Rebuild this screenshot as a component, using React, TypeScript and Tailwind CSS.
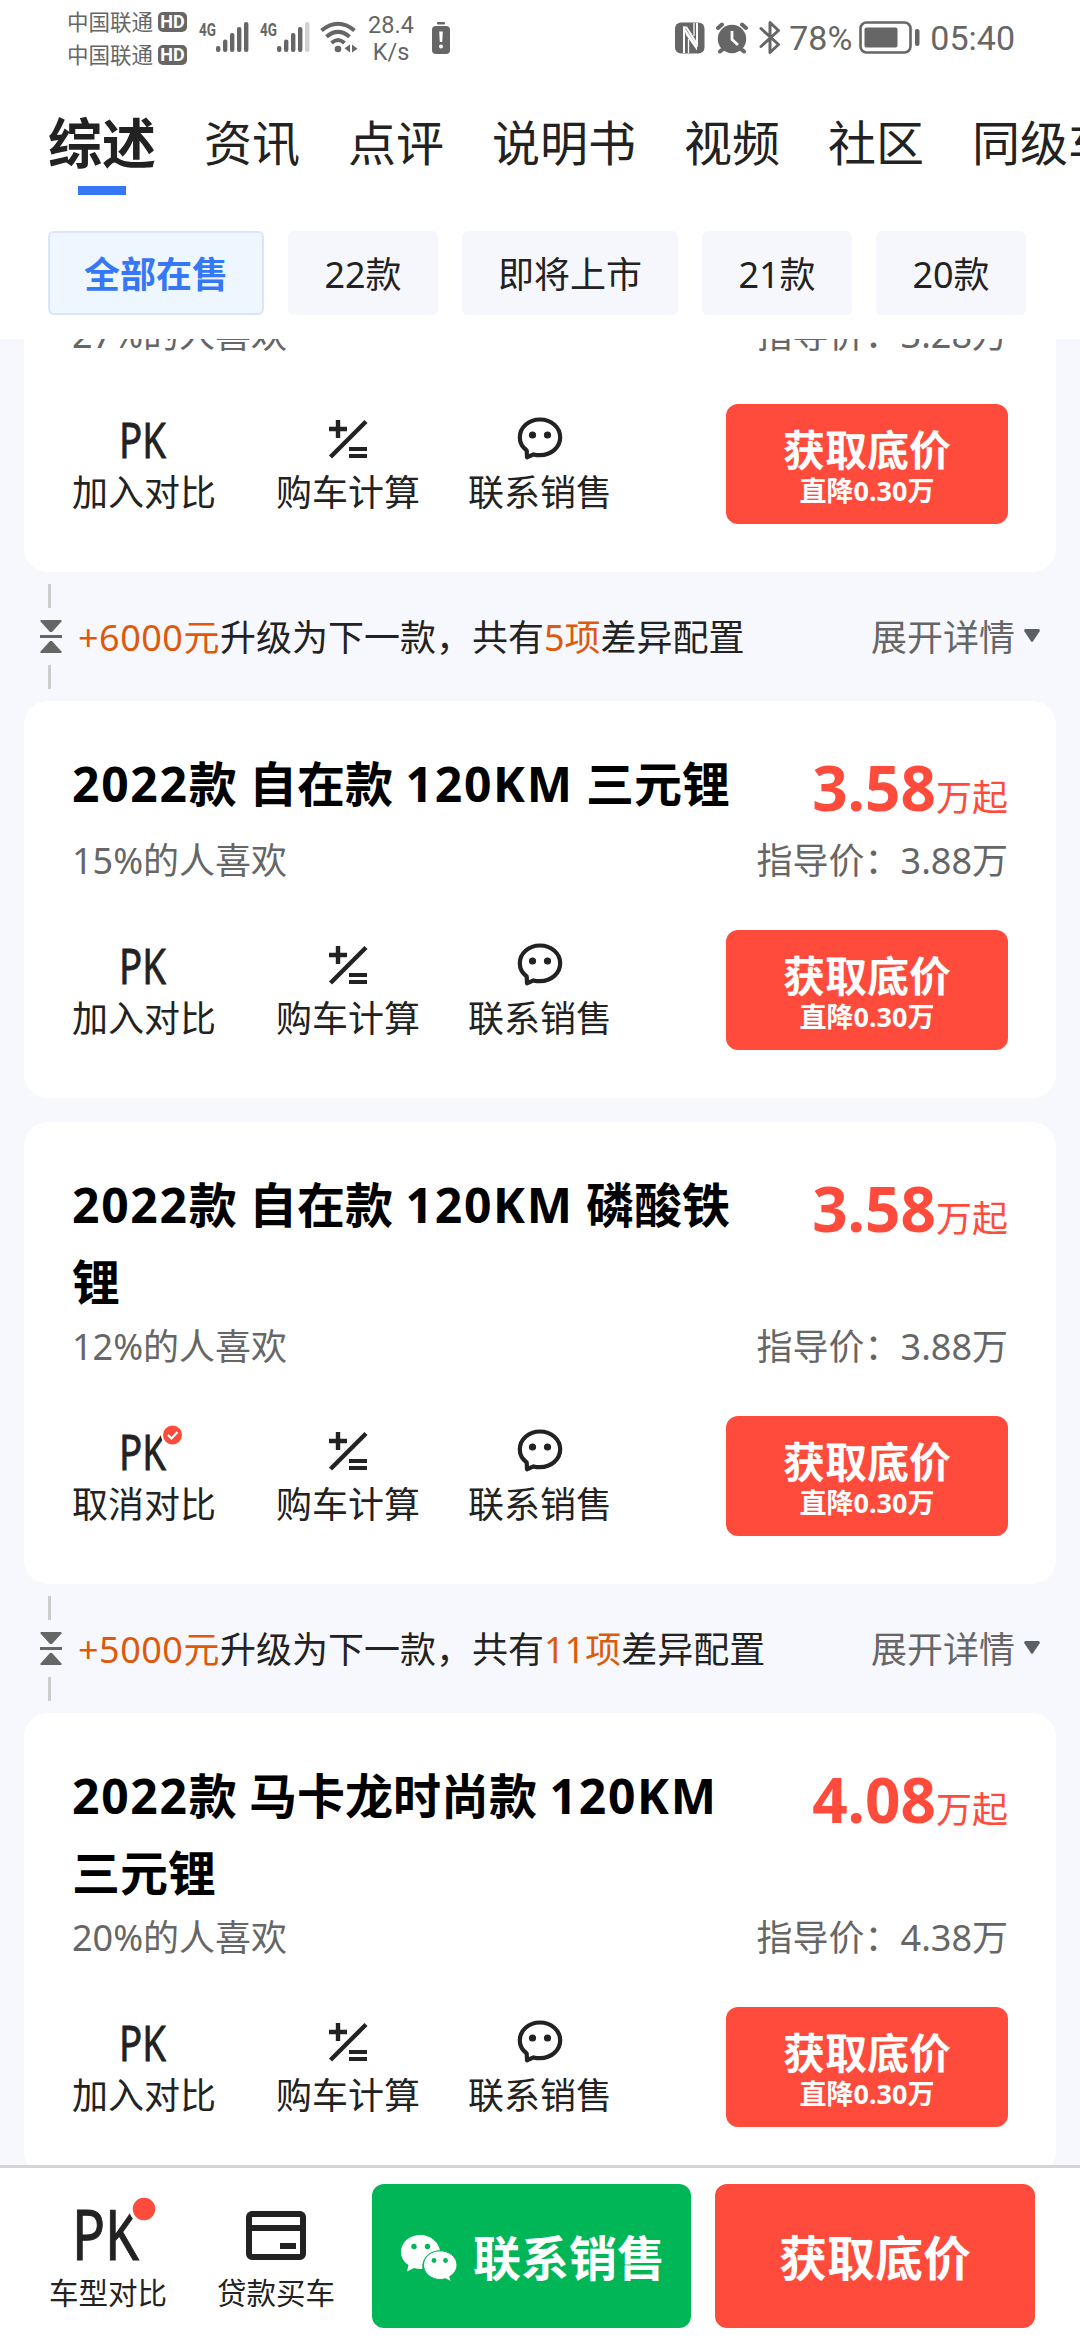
import React from 'react';

interface Car {
  title: string;
  likes: string;
  price: string;
  guide: string;
  compared?: boolean;
}

const tabs = ['资讯', '点评', '说明书', '视频', '社区', '同级车'];

const filters = [
  { label: '全部在售', wide: true, active: true },
  { label: '22款' },
  { label: '即将上市', wide: true },
  { label: '21款' },
  { label: '20款' },
];

const cars: Car[] = [
  { title: '2022款 轻松款 120KM', likes: '27%', price: '2.98', guide: '3.28万' },
  { title: '2022款 自在款 120KM 三元锂', likes: '15%', price: '3.58', guide: '3.88万' },
  { title: '2022款 自在款 120KM 磷酸铁锂', likes: '12%', price: '3.58', guide: '3.88万', compared: true },
  { title: '2022款 马卡龙时尚款 120KM 三元锂', likes: '20%', price: '4.08', guide: '4.38万' },
];

const Signal = ({ weak }: { weak?: boolean }) => (
  <svg width="50" height="32" viewBox="0 0 50 32" fill="#666" className="shrink-0 overflow-visible">
    <text x="0" y="14.5" fontSize="18" fontWeight="700" fontFamily="Roboto, sans-serif" textLength="17" lengthAdjust="spacingAndGlyphs">4G</text>
    <rect x="17" y="25" width="4.4" height="6" rx="2" />
    <rect x="24" y="18.5" width="4.4" height="12.5" rx="2" />
    <rect x="31" y="12" width="4.4" height="19" rx="2" />
    <rect x="38" y="6" width="4.4" height="25" rx="2" />
    <rect x="45" y="1" width="4.4" height="30" rx="2" fill={weak ? '#d0d0d0' : '#666'} />
  </svg>
);

const WifiIcon = () => (
  <svg width="38" height="32" viewBox="0 0 38 32" fill="none" stroke="#666" strokeWidth="4">
    <path d="M1.5 9.5 Q18 -4 34.5 9.5" />
    <path d="M6.5 15.8 Q18 6 29.5 15.8" />
    <path d="M11.500 22 Q18 16 24.500 22" />
    <circle cx="18" cy="28" r="3.3" fill="#666" stroke="none" />
    <path d="M30 23.5v8l-5.5-4.2zM32 31.5v-8l5.5 4.2z" fill="#666" stroke="none" />
  </svg>
);

const StatusBar = () => (
  <div className="flex h-[75px] shrink-0 items-start text-[#666]">
    <div className="flex flex-col pt-[5px] pl-[67px]">
      {[0, 1].map((i) => (
        <div key={i} className="flex h-[33px] items-center gap-[5px] text-[21.5px] leading-[33px]">
          中国联通
          <span className="flex h-5 w-[29px] items-center justify-center rounded-[5px] bg-[#666] font-['Roboto'] text-[18px] leading-none font-bold text-white">HD</span>
        </div>
      ))}
    </div>
    <div className="flex pt-[21px] pl-[12px]">
      <Signal />
      <div className="w-[11px]" />
      <Signal weak />
      <div className="w-[10px]" />
      <WifiIcon />
    </div>
    <div className="ml-[9px] w-[48px] pt-[12px] text-center font-['Roboto'] text-[23.5px] leading-[27px]">
      28.4<br />K/s
    </div>
    <svg width="18" height="33" viewBox="0 0 18 33" className="mt-[22px] ml-[17px]">
      <rect x="5" y="0" width="8" height="2.5" rx="1" fill="#666" />
      <rect x="0" y="4" width="18" height="28" rx="4" fill="#666" />
      <path d="M7.2 9.5h3.6l-.6 10.5h-2.4z" fill="#fff" />
      <circle cx="9" cy="24.5" r="2" fill="#fff" />
    </svg>
    <div className="ml-auto flex pr-[65px]">
      <svg width="30" height="32" viewBox="0 0 30 32" className="mt-[22px]">
        <rect x="0" y="0.5" width="29.5" height="31" rx="6" fill="#666" />
        <path d="M9 31V5.5l2.5 0L22 22V1" fill="none" stroke="#fff" strokeWidth="2" />
        <path d="M8 3.500l14 20v5l-11-15.500z" fill="#fff" />
        <path d="M13.500 31V17M19 1v13" fill="none" stroke="#fff" strokeWidth="1.300" />
      </svg>
      <svg width="34" height="32" viewBox="0 0 34 32" className="mt-[22px] ml-[10px]">
        <g stroke="#666" strokeWidth="4" strokeLinecap="round">
          <path d="M3 6l4-3.5M31 6l-4-3.5M5 29.5l5-4M29 29.5l-5-4" />
        </g>
        <circle cx="17" cy="17" r="14.2" fill="#666" />
        <path d="M17 9v8.5l6 5.5" fill="none" stroke="#fff" strokeWidth="2.8" />
      </svg>
      <svg width="22" height="36" viewBox="0 0 22 36" fill="none" stroke="#666" strokeWidth="3" strokeLinejoin="round" strokeLinecap="round" className="mt-[20px] ml-[10px]">
        <path d="M2 8.5l17.5 16L11 32.5V2.5l8.5 8L2 26.5" />
      </svg>
      <span className="ml-[8px] pt-[18px] font-['Roboto'] text-[34px] leading-[40px]">78%</span>
      <svg width="61" height="34" viewBox="0 0 61 34" className="mt-[21px] ml-[7px]">
        <rect x="1.5" y="1.5" width="50" height="30" rx="6" fill="none" stroke="#666" strokeWidth="2.6" />
        <rect x="5.5" y="6.5" width="33" height="20" rx="2" fill="#666" />
        <rect x="56" y="8" width="4.5" height="17" rx="2" fill="#666" />
      </svg>
      <span className="ml-[10px] pt-[18px] font-['Roboto'] text-[34px] leading-[40px]">05:40</span>
    </div>
  </div>
);

const PkIcon = ({ checked }: { checked?: boolean }) => (
  <svg width="44" height="44" viewBox="0 0 44 44" className="overflow-visible">
    <text x="-3" y="40.5" fontSize="50" fill="#222" stroke="#222" strokeWidth="0.8" fontFamily="'Noto Sans', sans-serif" textLength="47" lengthAdjust="spacingAndGlyphs">PK</text>
    {checked && (
      <>
        <circle cx="50.5" cy="6" r="10.5" fill="#ff4b3b" stroke="#fff" strokeWidth="2" />
        <path d="M46 6l3.5 3.5 6-6.5" fill="none" stroke="#fff" strokeWidth="2.2" />
      </>
    )}
  </svg>
);

const CalcIcon = () => (
  <svg width="44" height="44" viewBox="0 0 44 44" fill="none" stroke="#222">
    <path d="M3 12h18M12 3v18" strokeWidth="4.4" />
    <path d="M4.5 40L40 4.5" strokeWidth="4.4" />
    <path d="M23 32h18M23 39h18" strokeWidth="4.2" />
  </svg>
);

const ChatIcon = () => (
  <svg width="46" height="44" viewBox="0 0 46 44" fill="none" stroke="#222" strokeWidth="4.2">
    <path d="M9.7 33.5C5 30 2.8 25.5 2.8 20.300 2.800 10.500 11.500 2.500 23 2.500s20.200 8 20.200 17.800S34.500 38.200 23 38.200c-2.300 0-4.500-.2-6.500-.8L10 40.200z" strokeLinejoin="round" />
    <circle cx="15.5" cy="18" r="3.6" fill="#222" stroke="none" />
    <circle cx="30.5" cy="18" r="3.6" fill="#222" stroke="none" />
  </svg>
);

const Action = ({ icon, label }: { icon: React.ReactNode; label: string }) => (
  <div className="flex w-36 flex-col items-center pt-[13px]">
    {icon}
    <span className="mt-[10px] text-[36px] leading-[44px] whitespace-nowrap text-[#222]">{label}</span>
  </div>
);

const CarCard = ({ car, className }: { car: Car; className?: string }) => (
  <div className={`mx-6 shrink-0 rounded-3xl bg-white px-12 pb-12 ${className ?? ''}`}>
    {/* title + price */}
    <div className="flex min-h-[89px] items-start justify-between">
      <h2 className="w-[666px] text-[48px] leading-[77px] font-bold text-black">
        {car.title.split(/([0-9A-Z]+)/).map((part, i) =>
          i % 2 ? <span key={i} className="tracking-[1.7px]">{part}</span> : part
        )}
      </h2>
      <div className="flex items-baseline text-[#ff4b3b]">
        <span className="text-[62px] leading-[85px] font-bold">{car.price}</span>
        <span className="text-[36px]">万起</span>
      </div>
    </div>
    <div className="flex h-[50px] justify-between text-[36px] leading-[53px] text-[#666]">
      <span>{car.likes}的人喜欢</span>
      <span>指导价：{car.guide}</span>
    </div>
    <div className="mt-[46px] flex">
      <Action icon={<PkIcon checked={car.compared} />} label={car.compared ? '取消对比' : '加入对比'} />
      <div className="w-[60px]" />
      <Action icon={<CalcIcon />} label="购车计算" />
      <div className="w-12" />
      <Action icon={<ChatIcon />} label="联系销售" />
      <button className="ml-auto flex h-[120px] w-[282px] flex-col items-center rounded-xl bg-[#ff4b3b] pt-[21px] font-bold text-white">
        <span className="text-[42px] leading-[50px]">获取底价</span>
        <span className="text-[27px] leading-[32px]">直降0.30万</span>
      </button>
    </div>
  </div>
);

const Upgrade = ({ amount, count }: { amount: string; count: string }) => (
  <div className="flex h-[129px] shrink-0 items-center pr-10 pl-10 text-[36px] text-[#222]">
    <div className="flex w-[22px] flex-col items-center">
      <div className="mr-[3px] h-6 w-[3px] bg-[#ccc]" />
      <svg width="22" height="33" viewBox="0 0 22 33" fill="#666" className="my-3">
        <path d="M1 0h20q1 .5 .5 1.5L12 12h-2L.5 1.5Q0 .5 1 0z" />
        <rect x="0" y="15" width="22" height="3" />
        <path d="M1 33h20q1-.5 .5-1.5L12 21h-2L.5 31.5Q0 32.5 1 33z" />
      </svg>
      <div className="mr-[3px] h-6 w-[3px] bg-[#ccc]" />
    </div>
    <p className="ml-4 pt-[3px] leading-[44px]">
      <span className="tracking-[0.5px] text-[#dd5a0c]">+{amount}元</span>升级为下一款，共有<span className="text-[#dd5a0c]">{count}项</span>差异配置
    </p>
    <span className="ml-auto pt-[3px] leading-[44px] text-[#666]">展开详情</span>
    <svg width="16" height="13" viewBox="0 0 16 13" fill="#5c6066" className="mb-[3px] ml-[9px]">
      <path d="M1.5 0h13q2 .5 1 2.5L9 12.2q-1 1.2-2 0L.5 2.5Q-.5 .5 1.5 0z" />
    </svg>
  </div>
);

const BottomBar = () => (
  <div className="flex h-[175px] shrink-0 items-start border-t-[3px] border-[#d4d4d4] bg-white pl-12 text-[#222]">
    <div className="flex w-[120px] flex-col items-center pt-[41px]">
      <svg width="66" height="52" viewBox="0 0 66 52" className="overflow-visible">
        <text x="-3" y="51" fontSize="70" fill="#222" stroke="#222" strokeWidth="1" fontFamily="'Noto Sans', sans-serif" textLength="67" lengthAdjust="spacingAndGlyphs">PK</text>
        <circle cx="69" cy="0" r="13" fill="#ff4b3b" stroke="#fff" strokeWidth="3.5" />
      </svg>
      <span className="mt-[11px] text-[29.5px] leading-[42px]">车型对比</span>
    </div>
    <div className="ml-12 flex w-[120px] flex-col items-center pt-[41px]">
      <svg width="60" height="52" viewBox="0 0 60 52" fill="none" stroke="#222" strokeWidth="6">
        <rect x="3" y="5" width="54" height="43" rx="3" />
        <path d="M3 19h54" />
        <path d="M34 37h16" />
      </svg>
      <span className="mt-[11px] text-[29.5px] leading-[42px]">贷款买车</span>
    </div>
    <button className="mt-4 ml-9 flex h-36 w-[319px] items-center justify-center gap-4 rounded-xl bg-[#00b657] pt-[3px] pl-[3px] text-[48px] font-bold text-white">
      <svg width="56" height="48" viewBox="0 0 56 48" fill="#fff">
        <path d="M19.5 1C8.7 1 0 8.3 0 18c0 5.5 2.8 10 7.5 13L6 37.5l7-3.5c2 .6 4.3 1 6.5 1h2C20 25 28 16.5 39 16.5 37.5 7.5 29 1 19.5 1z" />
        <circle cx="13" cy="12.5" r="2.7" fill="#00b657" />
        <circle cx="26.5" cy="12.5" r="2.7" fill="#00b657" />
        <path d="M39 16.800c-9 0-16.500 6.200-16.500 14.200S30 45.500 39 45.500c1.900 0 3.700-.3 5.300-.8l6 3-1.600-5.200c4.400-2.700 7.300-6.800 7.300-11.500 0-8-8-14.200-17-14.200z" stroke="#00b657" strokeWidth="1" />
        <circle cx="33" cy="26.5" r="2.4" fill="#00b657" />
        <circle cx="44.5" cy="26.5" r="2.4" fill="#00b657" />
      </svg>
      联系销售
    </button>
    <button className="mt-4 ml-6 h-36 w-80 rounded-xl bg-[#ff4b3b] pt-[3px] text-[48px] font-bold text-white">获取底价</button>
  </div>
);

export default function App() {
  return (
    <div className="flex h-[2340px] w-[1080px] flex-col overflow-hidden bg-[#f7f8fd] font-['Noto_Sans','Noto_Sans_CJK_SC',sans-serif]">
      <header className="h-[339px] shrink-0 bg-white">
        <StatusBar />
        <nav className="flex h-[120px] gap-12 overflow-hidden pl-12 text-[48px] leading-[136px] whitespace-nowrap text-[#222]">
          <div className="flex flex-col items-center">
            <span className="h-[111px] text-[54px] font-bold">综述</span>
            <div className="h-[9px] w-12 bg-[#3577f6]" />
          </div>
          {tabs.map((t) => (
            <span key={t}>{t}</span>
          ))}
        </nav>
        <div className="mt-9 flex gap-6 pl-12 text-[36px] text-[#222]">
          {filters.map((f) => (
            <span
              key={f.label}
              className={`flex h-[84px] items-center justify-center rounded-md pt-[3px] ${f.wide ? 'w-[216px]' : 'w-[150px]'} ${
                f.active ? 'border-2 border-[#d9e5f8] bg-[#eef6ff] font-bold text-[#3577f6]' : 'bg-[#f6f7fc]'
              }`}
            >
              {f.label}
            </span>
          ))}
        </div>
      </header>

      <main className="flex flex-1 flex-col overflow-hidden">
        {/* first card is scrolled under the header */}
        <CarCard car={cars[0]} className="-mt-[120px]" />
        <Upgrade amount="6000" count="5" />
        <CarCard car={cars[1]} className="pt-11" />
        <div className="h-6 shrink-0" />
        <CarCard car={cars[2]} className="pt-11" />
        <Upgrade amount="5000" count="11" />
        <CarCard car={cars[3]} className="pt-11" />
      </main>

      <BottomBar />
    </div>
  );
}
